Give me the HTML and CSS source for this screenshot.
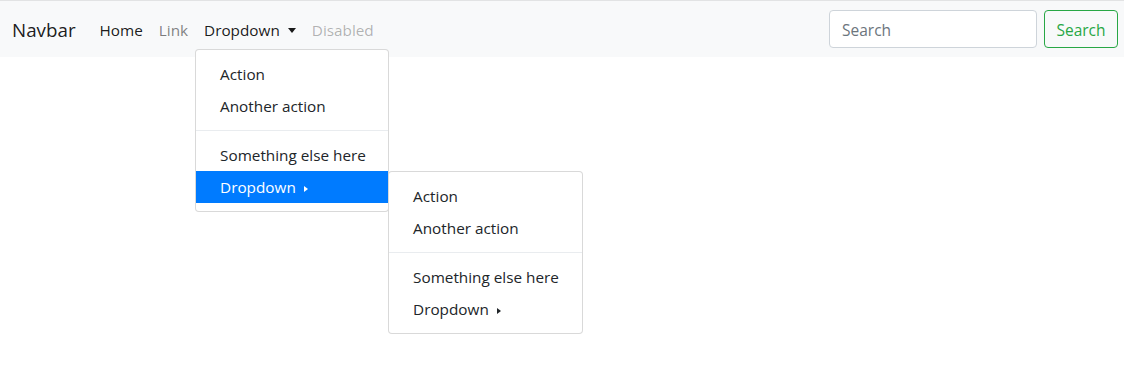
FILE: index.html
```html
<!DOCTYPE html>
<html lang="en">
<head>
<meta charset="utf-8">
<title>Navbar</title>
<link rel="stylesheet" href="styles.css">
</head>
<body>
<nav class="navbar">
  <div class="navbar-left">
    <a class="brand" href="#">Navbar</a>
    <ul class="nav">
      <li class="nav-item"><a class="nav-link active" href="#">Home</a></li>
      <li class="nav-item"><a class="nav-link" href="#">Link</a></li>
      <li class="nav-item dropdown">
        <a class="nav-link active toggle" href="#">Dropdown<span class="caret-down"></span></a>
        <ul class="menu menu-main">
          <li><a class="item" href="#">Action</a></li>
          <li><a class="item" href="#">Another action</a></li>
          <li class="divider"></li>
          <li><a class="item" href="#">Something else here</a></li>
          <li class="sub">
            <a class="item item-active" href="#">Dropdown<span class="caret-right caret-white"></span></a>
            <ul class="menu menu-sub">
              <li><a class="item" href="#">Action</a></li>
              <li><a class="item" href="#">Another action</a></li>
              <li class="divider"></li>
              <li><a class="item" href="#">Something else here</a></li>
              <li><a class="item" href="#">Dropdown<span class="caret-right"></span></a></li>
            </ul>
          </li>
        </ul>
      </li>
      <li class="nav-item"><span class="nav-link disabled">Disabled</span></li>
    </ul>
  </div>
  <form class="search">
    <input class="search-input" type="search" placeholder="Search">
    <button class="search-btn" type="button">Search</button>
  </form>
</nav>
</body>
</html>
```
FILE: styles.css
```css
* { box-sizing: border-box; }
html, body { margin: 0; padding: 0; }
html { min-height: 368px; }
body {
  min-height: 367px;
  font-family: "Open Sans", "Noto Sans", "Liberation Sans", sans-serif;
  font-size: 15.3px;
  line-height: 24px;
  color: #212529;
  background: #fff;
  border-top: 1px solid #e2e3e4;
}
a { text-decoration: none; color: inherit; }
ul { list-style: none; margin: 0; padding: 0; }

.navbar {
  position: relative;
  z-index: 5;
  display: flex;
  align-items: center;
  justify-content: space-between;
  height: 56px;
  padding: 8px 6px 8px 12px;
  background: #f8f9fa;
}
.navbar-left { display: flex; align-items: center; }
.brand {
  font-size: 18.8px;
  line-height: 30px;
  padding: 6px 0 4px;
  margin-right: 16px;
  color: rgba(0,0,0,.9);
}
.nav { display: flex; align-items: center; }
.nav-item { position: relative; }
.nav-link {
  display: block;
  padding: 9px 8px 7px;
  line-height: 24px;
  color: rgba(0,0,0,.5);
}
.nav-link.active { color: rgba(0,0,0,.9); }
.nav-link.disabled { color: rgba(0,0,0,.3); }
.caret-down {
  display: inline-block;
  margin-left: 8px;
  vertical-align: 3px;
  border-top: 5px solid;
  border-left: 4.5px solid transparent;
  border-right: 4.5px solid transparent;
}

.menu {
  position: absolute;
  z-index: 10;
  background: #fff;
  border: 1px solid rgba(0,0,0,.15);
  border-radius: 4px;
  padding: 8px 0;
  white-space: nowrap;
}
.menu-main { top: 100%; left: -1px; width: 194px; }
.sub { position: relative; }
.menu-sub { top: 0; left: 100%; width: 195px; }
.item {
  display: block;
  padding: 4px 24px;
  line-height: 24px;
  color: #212529;
}
.item-active { background: #007bff; color: #fff; }
.divider { height: 0; margin: 8px 0; border-top: 1px solid #e9ecef; }
.caret-right {
  display: inline-block;
  margin-left: 8px;
  vertical-align: 1px;
  border-left: 4px solid #212529;
  border-top: 3.5px solid transparent;
  border-bottom: 3.5px solid transparent;
}
.caret-white { border-left-color: #fff; }

.search { display: flex; align-items: center; margin: 0; }
.search-input {
  width: 208px;
  height: 38px;
  margin-right: 7px;
  padding: 7px 12px 5px;
  font: inherit;
  font-size: 15.5px;
  color: #495057;
  background: #fff;
  border: 1px solid #ced4da;
  border-radius: 4px;
}
.search-input::placeholder { color: #6c757d; }
.search-btn {
  width: 74px;
  height: 38px;
  padding: 7px 0 5px;
  font: inherit;
  font-size: 15.5px;
  color: #28a745;
  background: transparent;
  border: 1px solid #28a745;
  border-radius: 4px;
}
```
